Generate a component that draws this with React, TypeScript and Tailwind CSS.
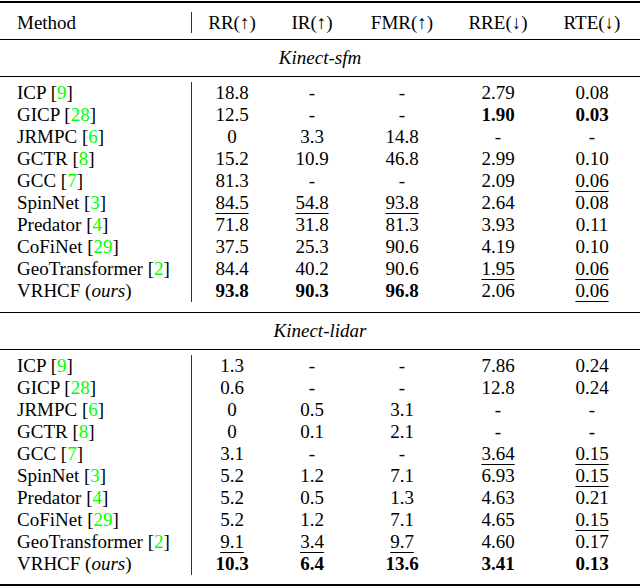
type Cell = { v: string; b?: boolean; u?: boolean };

interface Row {
  name: string;
  cite: string;
  ours?: boolean;
  cells: Cell[];
}

const c = (v: string, flag?: "b" | "u"): Cell => ({ v, b: flag === "b", u: flag === "u" });

const sfm: Row[] = [
  { name: "ICP", cite: "9", cells: [c("18.8"), c("-"), c("-"), c("2.79"), c("0.08")] },
  { name: "GICP", cite: "28", cells: [c("12.5"), c("-"), c("-"), c("1.90", "b"), c("0.03", "b")] },
  { name: "JRMPC", cite: "6", cells: [c("0"), c("3.3"), c("14.8"), c("-"), c("-")] },
  { name: "GCTR", cite: "8", cells: [c("15.2"), c("10.9"), c("46.8"), c("2.99"), c("0.10")] },
  { name: "GCC", cite: "7", cells: [c("81.3"), c("-"), c("-"), c("2.09"), c("0.06", "u")] },
  { name: "SpinNet", cite: "3", cells: [c("84.5", "u"), c("54.8", "u"), c("93.8", "u"), c("2.64"), c("0.08")] },
  { name: "Predator", cite: "4", cells: [c("71.8"), c("31.8"), c("81.3"), c("3.93"), c("0.11")] },
  { name: "CoFiNet", cite: "29", cells: [c("37.5"), c("25.3"), c("90.6"), c("4.19"), c("0.10")] },
  { name: "GeoTransformer", cite: "2", cells: [c("84.4"), c("40.2"), c("90.6"), c("1.95", "u"), c("0.06", "u")] },
  { name: "VRHCF", cite: "", ours: true, cells: [c("93.8", "b"), c("90.3", "b"), c("96.8", "b"), c("2.06"), c("0.06", "u")] },
];

const lidar: Row[] = [
  { name: "ICP", cite: "9", cells: [c("1.3"), c("-"), c("-"), c("7.86"), c("0.24")] },
  { name: "GICP", cite: "28", cells: [c("0.6"), c("-"), c("-"), c("12.8"), c("0.24")] },
  { name: "JRMPC", cite: "6", cells: [c("0"), c("0.5"), c("3.1"), c("-"), c("-")] },
  { name: "GCTR", cite: "8", cells: [c("0"), c("0.1"), c("2.1"), c("-"), c("-")] },
  { name: "GCC", cite: "7", cells: [c("3.1"), c("-"), c("-"), c("3.64", "u"), c("0.15", "u")] },
  { name: "SpinNet", cite: "3", cells: [c("5.2"), c("1.2"), c("7.1"), c("6.93"), c("0.15", "u")] },
  { name: "Predator", cite: "4", cells: [c("5.2"), c("0.5"), c("1.3"), c("4.63"), c("0.21")] },
  { name: "CoFiNet", cite: "29", cells: [c("5.2"), c("1.2"), c("7.1"), c("4.65"), c("0.15", "u")] },
  { name: "GeoTransformer", cite: "2", cells: [c("9.1", "u"), c("3.4", "u"), c("9.7", "u"), c("4.60"), c("0.17")] },
  { name: "VRHCF", cite: "", ours: true, cells: [c("10.3", "b"), c("6.4", "b"), c("13.6", "b"), c("3.41", "b"), c("0.13", "b")] },
];

const cols = "grid grid-cols-[192px_80px_80px_100px_92px_96px]";
const headers = ["RR(↑)", "IR(↑)", "FMR(↑)", "RRE(↓)", "RTE(↓)"];

function Rule({ thick }: { thick?: boolean }) {
  return <div className={thick ? "h-[2px] bg-black" : "h-px bg-black"} />;
}

function Section({ title }: { title: string }) {
  return (
    <div className="h-[36px] flex items-center justify-center italic">{title}</div>
  );
}

function Body({ rows, bottom }: { rows: Row[]; bottom: string }) {
  return (
    <div className={`pt-[5px] ${bottom}`}>
      {rows.map((r) => (
        <div key={r.name} className={`${cols} h-[22px] leading-[22px]`}>
          <div className="pl-[17px] border-r border-[#333] whitespace-nowrap">
            {r.name}{" "}
            {r.ours ? (
              <>
                (<span className="italic">ours</span>)
              </>
            ) : (
              <>
                [<span className="text-[#00ff00]">{r.cite}</span>]
              </>
            )}
          </div>
          {r.cells.map((cell, i) => (
            <div key={i} className="text-center">
              <span
                className={`${cell.b ? "font-bold" : ""} ${cell.u ? "underline decoration-1 underline-offset-[4px]" : ""}`}
              >
                {cell.v}
              </span>
            </div>
          ))}
        </div>
      ))}
    </div>
  );
}

export default function App() {
  return (
    <div className="w-[640px] h-[588px] bg-white text-black text-[19px] font-[family-name:Liberation_Serif,serif] pt-px">
      <Rule thick />
      <div className="pt-[9px] pb-[6px]">
        <div className={`${cols} h-[21px] leading-[21px]`}>
          <div className="pl-[17px] border-r border-[#333]">Method</div>
          {headers.map((h) => (
            <div key={h} className="text-center">{h}</div>
          ))}
        </div>
      </div>
      <Rule />
      <Section title="Kinect-sfm" />
      <Rule />
      <Body rows={sfm} bottom="pb-[10px]" />
      <Rule />
      <Section title="Kinect-lidar" />
      <Rule />
      <Body rows={lidar} bottom="pb-[9px]" />
      <Rule thick />
    </div>
  );
}
